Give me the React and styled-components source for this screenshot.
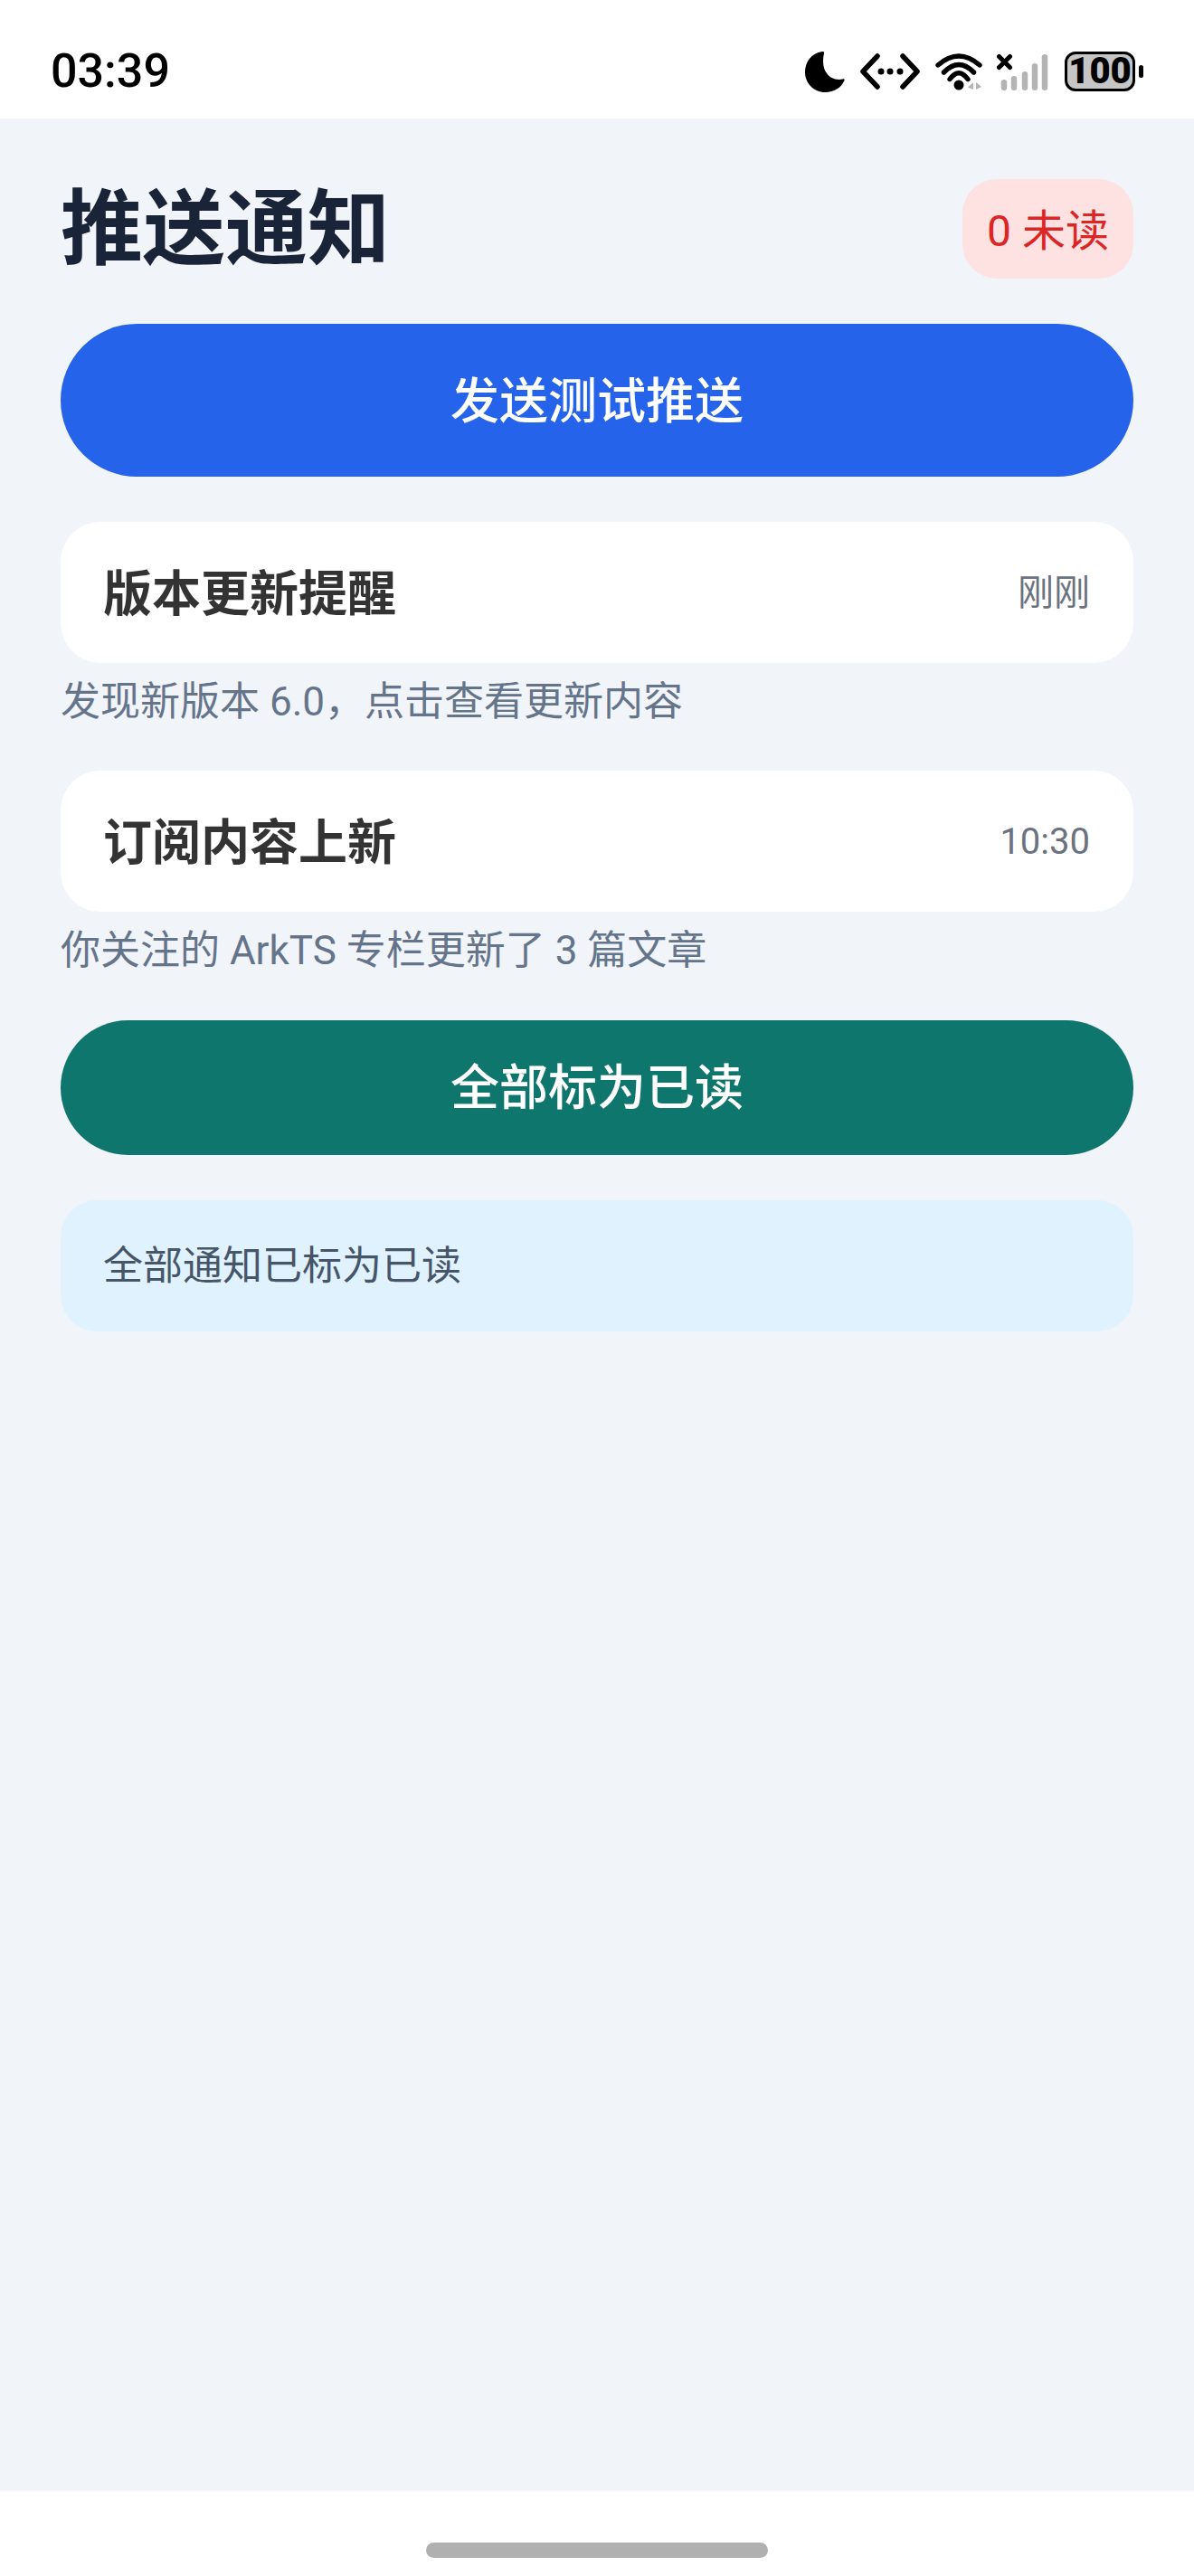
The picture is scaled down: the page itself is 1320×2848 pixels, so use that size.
import React from "react";
import styled, { createGlobalStyle } from "styled-components";

const CJK = `Roboto, "Noto Sans CJK SC", sans-serif`;

const Global = createGlobalStyle`
  html, body { margin: 0; padding: 0; background: #fff; }
  * { box-sizing: border-box; }
`;

const Page = styled.div`
  width: 1320px;
  height: 2848px;
  display: flex;
  flex-direction: column;
  background: #f1f4f9;
  font-family: ${CJK};
`;

const StatusBar = styled.header`
  height: 131px;
  flex: none;
  background: #fff;
  display: flex;
  align-items: center;
  justify-content: space-between;
  padding: 27px 56px 0 56px;
`;

const Clock = styled.span`
  font-family: Roboto, sans-serif;
  font-size: 52px;
  font-weight: 500;
  line-height: 60px;
  color: #000;
`;

const StatusIcons = styled.div`
  display: flex;
  align-items: center;
`;

const Icon = styled.svg`
  display: block;
  flex: none;
  margin-left: ${(p) => p.$gap}px;
`;

const Battery = styled.div`
  display: flex;
  align-items: center;
  gap: 4px;
  margin-left: 15px;
`;

const BatteryBody = styled.div`
  width: 78px;
  height: 44px;
  border: 3.5px solid #000;
  border-radius: 12px;
  background: #c6c6c6;
  display: flex;
  align-items: center;
  justify-content: center;
  font-family: Roboto, sans-serif;
  font-weight: 900;
  font-size: 40px;
  line-height: 36px;
  color: #000;
`;

const BatteryTip = styled.div`
  width: 5px;
  height: 14px;
  border-radius: 3px;
  background: #000;
`;

const Content = styled.main`
  flex: 1;
  padding: 66px 67px 0;
  display: flex;
  flex-direction: column;
  gap: 50px;
`;

const Header = styled.div`
  display: flex;
  align-items: center;
  justify-content: space-between;
`;

const Title = styled.h1`
  margin: 0;
  padding-top: 4px;
  font-size: 91px;
  font-weight: 700;
  line-height: 107px;
  color: #1a2438;
`;

const Badge = styled.div`
  height: 110px;
  padding: 0 27px 3px;
  border-radius: 38px;
  background: #fee2e2;
  color: #dc2626;
  font-size: 48px;
  display: flex;
  align-items: center;
`;

const PillButton = styled.button`
  display: block;
  width: 100%;
  height: ${(p) => p.$height}px;
  border: 0;
  padding: 0 0 ${(p) => p.$lift}px;
  border-radius: 85px;
  background: ${(p) => p.$color};
  color: #fff;
  font-family: inherit;
  font-size: 54px;
  font-weight: 500;
`;

const List = styled.div`
  display: flex;
  flex-direction: column;
  gap: 49px;
`;

const Item = styled.article`
  display: flex;
  flex-direction: column;
`;

const Card = styled.div`
  height: 156px;
  padding: 0 48px 6px 47px;
  border-radius: 44px;
  background: #fff;
  display: flex;
  align-items: center;
  justify-content: space-between;
`;

const ItemTitle = styled.span`
  font-size: 54px;
  font-weight: 700;
  color: #333;
`;

const ItemTime = styled.span`
  padding-top: ${(p) => p.$drop}px;
  font-size: 40px;
  color: #6b7280;
`;

const ItemBody = styled.p`
  margin: 16px 0 0;
  font-size: 44px;
  line-height: 54px;
  color: #64748b;
`;

const Note = styled.div`
  height: 145px;
  padding: 0 47px 8px;
  border-radius: 40px;
  background: #e0f2fe;
  color: #475569;
  font-size: 44px;
  display: flex;
  align-items: center;
`;

const BottomBar = styled.footer`
  height: 94px;
  flex: none;
  background: #fff;
  display: flex;
  justify-content: center;
  padding-top: 57px;
`;

const HomeIndicator = styled.div`
  width: 378px;
  height: 17px;
  border-radius: 9px;
  background: #b0b0b0;
`;

const items = [
  { title: "版本更新提醒", time: "刚刚", drop: 0, body: "发现新版本 6.0，点击查看更新内容" },
  { title: "订阅内容上新", time: "10:30", drop: 6, body: "你关注的 ArkTS 专栏更新了 3 篇文章" },
];

const bars = [
  [8, 29],
  [19, 25],
  [31, 20],
  [42, 11],
  [53, 1],
];

const Moon = () => (
  <Icon $gap={0} width="44" height="46" viewBox="0 0 44 46">
    <path d="M19 1 C7 3 0 12 0 24 C0 36 10 46 22 46 C32 46 40 41 43.5 33 C44 31.5 43 31 41.5 31.5 C34 33 27 30 24 25 C20 20 19 12 21 3 C21.5 1.5 20.5 .7 19 1 Z" fill="#000" />
  </Icon>
);

const Code = () => (
  <Icon $gap={17} width="66" height="40" viewBox="0 0 66 40">
    <path d="M19 3 L3 20 L19 37 M47 3 L63 20 L47 37" fill="none" stroke="#000" strokeWidth="5.5" strokeLinecap="round" strokeLinejoin="round" />
    <circle cx="23" cy="20" r="3.5" fill="#000" />
    <circle cx="33" cy="20" r="3.5" fill="#000" />
    <circle cx="44" cy="20" r="3.5" fill="#000" />
  </Icon>
);

const Wifi = () => (
  <Icon $gap={17} width="54" height="41" viewBox="0 0 54 41">
    <path d="M3 13 Q26 -7 49 13 M9.5 21 Q26 4 42.5 21 M16 28.5 Q26 15 36 28.5" fill="none" stroke="#000" strokeWidth="5.4" strokeLinecap="round" />
    <circle cx="26" cy="35" r="5.5" fill="#000" />
    <path d="M42 32 L42 40 L36 37.5 Z M45 32 L45 40 L51 37 Z" fill="#b4b4b4" />
  </Icon>
);

const Cell = () => (
  <Icon $gap={14} width="60" height="41" viewBox="0 0 60 41">
    {bars.map(([x, top]) => (
      <rect key={x} x={x - 3.25} y={top} width="6.5" height={41 - top} rx="3.25" fill="#b4b4b4" />
    ))}
    <path d="M2.5 3.5 L14.5 15.5 M14.5 3.5 L2.5 15.5" stroke="#000" strokeWidth="5" strokeLinecap="round" />
  </Icon>
);

export default function App() {
  return (
    <Page>
      <Global />
      <StatusBar>
        <Clock>03:39</Clock>
        <StatusIcons>
          <Moon />
          <Code />
          <Wifi />
          <Cell />
          <Battery>
            <BatteryBody>100</BatteryBody>
            <BatteryTip />
          </Battery>
        </StatusIcons>
      </StatusBar>
      <Content>
        <Header>
          <Title>推送通知</Title>
          <Badge>0 未读</Badge>
        </Header>
        <PillButton $height={169} $lift={6} $color="#2563eb">发送测试推送</PillButton>
        <List>
          {items.map((item) => (
            <Item key={item.title}>
              <Card>
                <ItemTitle>{item.title}</ItemTitle>
                <ItemTime $drop={item.drop}>{item.time}</ItemTime>
              </Card>
              <ItemBody>{item.body}</ItemBody>
            </Item>
          ))}
        </List>
        <PillButton $height={149} $lift={8} $color="#0f766e">全部标为已读</PillButton>
        <Note>全部通知已标为已读</Note>
      </Content>
      <BottomBar>
        <HomeIndicator />
      </BottomBar>
    </Page>
  );
}
